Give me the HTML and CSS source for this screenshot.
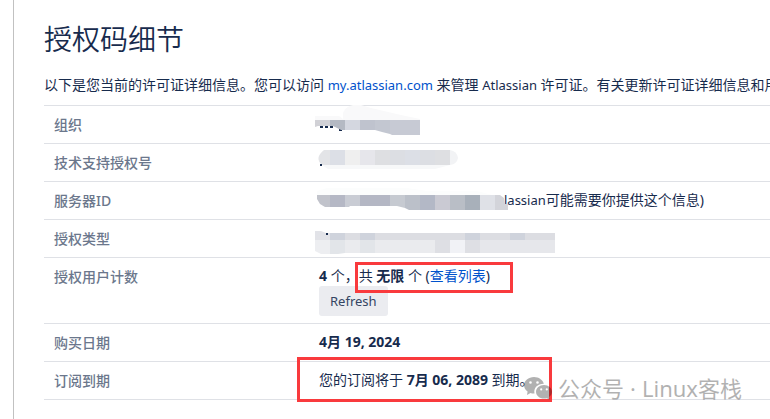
FILE: index.html
```html
<!DOCTYPE html>
<html lang="zh-CN">
<head>
<meta charset="utf-8">
<meta name="viewport" content="width=device-width, initial-scale=1">
<title>授权码细节</title>
<link rel="stylesheet" href="styles.css">
</head>
<body>
<main class="panel">
  <h1 class="title">授权码细节</h1>
  <p class="intro">以下是您当前的许可证详细信息。您可以访问 <a class="latin" href="#account">my.atlassian.com</a> 来管理 <span class="latin">Atlassian</span> 许可证。有关更新许可证详细信息和用</p>
  <table class="details">
    <tbody>
      <tr>
        <th scope="row">组织</th>
        <td>
          <svg class="mask" viewBox="309 106 260 37" width="260" height="37" aria-hidden="true">
            <path fill="#f9f9fa" d="M315 120v-4h24l4 3 0-6q3-7 10-8h8l10 3 30 7 19 4v2z"/>
            <path fill="#172b4d" d="M320 126h3v2h-3zM325 126h3v2h-3zM330 126h3v2h-3zM339 129h3v2h-3z"/>
            <path fill="#d1d1d6" d="M315 120h15v6h-12l-3 1z"/>
            <path fill="#b4b9c3" d="M330 120h15v10h-4l-4-2-4-2h-3z"/>
            <path fill="#d4d7e0" d="M345 120h15v10h-15z"/>
            <path fill="#bfc3ce" d="M360 120h15v10h-15z"/>
            <path fill="#c3c7d1" d="M375 120h15v14l-8-2-7-2z"/>
            <path fill="#c7cad4" d="M390 120h30v15h-28l-2-1z"/>
          </svg>
        </td>
      </tr>
      <tr>
        <th scope="row">技术支持授权号</th>
        <td>
          <svg class="mask" viewBox="309 144 260 37" width="260" height="37" aria-hidden="true">
            <path fill="#f7f8f9" d="M322 165h128l-15 4H328z"/>
            <path fill="#e3e4e7" d="M330 150h-6q-10 8-2 15h8z"/>
            <path fill="#dcdfe6" d="M330 150h15v15h-15zM405 150h15v15h-15z"/>
            <path fill="#efefef" d="M345 150h15v15h-15z"/>
            <path fill="#e6e6eb" d="M360 150h15v15h-15z"/>
            <path fill="#dedfe2" d="M375 150h15v15h-15zM435 150h15v15h-15z"/>
            <path fill="#dcdee3" d="M390 150h15v15h-15zM420 150h15v15h-15z"/>
            <path fill="#f2f3f5" d="M450 150q7 1 8 8-1 6-8 7z"/>
            <path fill="#172b4d" d="M320 164h2v2h-2z"/>
          </svg>
        </td>
      </tr>
      <tr>
        <th scope="row">服务器ID</th>
        <td>
          <span class="masked-text"><span class="latin">lassian</span>可能需要你提供这个信息)</span>
          <svg class="mask" viewBox="309 182 260 37" width="260" height="37" aria-hidden="true">
            <path fill="#fcfdfd" d="M317 195v-4l10-3h80l20 3h50l15 4z"/>
            <path fill="#c1c3cb" d="M317 195h13v12h-5l-5-3-3-5z"/>
            <path fill="#b5b8c5" d="M330 195h15v12h-15z"/>
            <path fill="#c9ccd4" d="M345 195h15v11l-10 0-1 1h-4z"/>
            <path fill="#b4b7c4" d="M360 195h30v11h-30z"/>
            <path fill="#c6cad1" d="M390 195h15v13l-8-2h-7z"/>
            <path fill="#bbc0c9" d="M405 195h15v15h-11l-4-2z"/>
            <path fill="#b3b8c6" d="M420 195h15v15h-15z"/>
            <path fill="#cacad3" d="M435 195h15v15h-15z"/>
            <path fill="#b9bec6" d="M450 195h15v15h-15z"/>
            <path fill="#a8b0ba" d="M465 195h15v15h-15z"/>
            <path fill="#dfe1e7" d="M480 195h15v15h-15z"/>
            <path fill="#d3d4da" d="M495 195h5l4 3 1 6h3v6h-13z"/>
          </svg>
        </td>
      </tr>
      <tr>
        <th scope="row">授权类型</th>
        <td>
          <svg class="mask" viewBox="309 220 260 37" width="260" height="37" aria-hidden="true">
            <path fill="#e2e3e8" d="M315 231h6l5 2h4v7h-15z"/>
            <path fill="#edeef1" d="M315 240h15v14h-9l-6-3z"/>
            <path fill="#cfd3dc" d="M330 233h15v7h-15zM360 233h15v7h-15zM465 233h15v7h-15zM510 233h15v7h-15z"/>
            <path fill="#dcdde2" d="M345 233h15v7h-15zM375 233h90v7h-90zM480 233h30v7h-30zM525 233h30v7h-30z"/>
            <path fill="#e2e5e9" d="M330 240h15v13l-7 1h-8zM360 240h15v13h-15z"/>
            <path fill="#eaebee" d="M345 240h15v13h-15zM375 240h60v13h-60z"/>
            <path fill="#dedfe4" d="M435 240h15v13h-15zM465 240h15v13h-15z"/>
            <path fill="#f1f2f6" d="M450 240h15v13h-15z"/>
            <path fill="#e6e7eb" d="M480 240h75v13h-75z"/>
            <path fill="#172b4d" d="M326 233h2v2h-2z"/>
          </svg>
        </td>
      </tr>
      <tr>
        <th scope="row">授权用户计数</th>
        <td>
          <div><strong>4</strong> 个，共 <strong>无限</strong> 个 (<a href="#users">查看列表</a>)</div>
          <button class="refresh" type="button">Refresh</button>
          <span class="marker marker-users"></span>
        </td>
      </tr>
      <tr>
        <th scope="row">购买日期</th>
        <td><strong>4月 19, 2024</strong></td>
      </tr>
      <tr>
        <th scope="row">订阅到期</th>
        <td>您的订阅将于 <strong>7月 06, 2089</strong> 到期。<span class="marker marker-expiry"></span></td>
      </tr>
    </tbody>
  </table>
  <div class="watermark">
    <svg width="28" height="24" viewBox="0 0 28 24" aria-hidden="true">
      <path fill-rule="evenodd" d="M10 1C4.500 1 0 4.700 0 9.300c0 2.600 1.400 4.800 3.600 6.300L3 19l3.500-2c1.300.4 2.700.6 4 .5C9.300 12 13.500 8 19.800 7.800 18.800 3.800 14.800 1 10 1zM6.500 5.200a1.300 1.300 0 1 1 0 2.600 1.300 1.300 0 0 1 0-2.600zm7 0a1.300 1.300 0 1 1 0 2.600 1.300 1.300 0 0 1 0-2.600z"/>
      <path fill-rule="evenodd" d="M20 9c-4.500 0-8 3-8 6.800s3.500 6.800 8 6.800c1 0 2-.2 2.800-.4l2.900 1.600-.7-2.800c1.800-1.300 3-3.100 3-5.200C28 12 24.500 9 20 9zm-2.800 3.300a1.100 1.100 0 1 1 0 2.200 1.100 1.100 0 0 1 0-2.200zm5.600 0a1.100 1.100 0 1 1 0 2.200 1.100 1.100 0 0 1 0-2.200z"/>
    </svg>
    <span>公众号</span>
    <span>·</span>
    <span>Linux客栈</span>
  </div>
</main>
</body>
</html>
```
FILE: styles.css
```css
* {
  box-sizing: border-box;
}

body {
  margin: 0;
  background: #fff;
  color: #172b4d;
  font: 14px/20px "Noto Sans", "Noto Sans CJK SC", sans-serif;
  overflow: hidden;
}

a {
  color: #0052cc;
  text-decoration: none;
}

.latin {
  font-size: 13px;
}

.panel {
  position: relative;
  min-height: 100vh;
  margin-left: 13px;
  padding: 18px 0 0 30px;
  border-left: 1px solid #c1c1c1;
}

.title {
  margin: 0 0 17px;
  font-family: "Noto Sans CJK SC", sans-serif;
  font-size: 28px;
  font-weight: 350;
  line-height: 40px;
}

.intro {
  margin: 0 0 10px;
  white-space: nowrap;
}

.details {
  width: 100%;
  border-collapse: separate;
  border-spacing: 0;
  table-layout: fixed;
  border-top: 1px solid #dfe1e6;
}

.details th,
.details td {
  position: relative;
  height: 38px;
  padding: 8px 10px 7px;
  border-bottom: 1px solid #dfe1e6;
  text-align: left;
  vertical-align: top;
}

.details th {
  width: 265px;
  padding-top: 9px;
  color: #6b778c;
  font-weight: 500;
}

.mask {
  position: absolute;
  top: 0;
  left: 0;
  overflow: visible;
}

.masked-text {
  padding-left: 185px;
}

.refresh {
  display: block;
  height: 30px;
  padding: 0 11px;
  border: 0;
  border-radius: 3px;
  background: #ebecf0;
  color: #344563;
  font: 13px/30px "Noto Sans", sans-serif;
}

.marker {
  position: absolute;
  border: 3px solid #f93a3d;
  pointer-events: none;
}

.marker-users {
  top: 4px;
  left: 46px;
  width: 158px;
  height: 31px;
}

.marker-expiry {
  top: -5px;
  left: -12px;
  width: 255px;
  height: 45px;
}

.watermark {
  position: absolute;
  top: 373px;
  left: 510px;
  display: flex;
  align-items: center;
  gap: 6px;
  color: #000;
  fill: #000;
  font: 22px/30px "Noto Sans", "Noto Sans CJK SC", sans-serif;
  white-space: nowrap;
  opacity: 0.3;
}
```
